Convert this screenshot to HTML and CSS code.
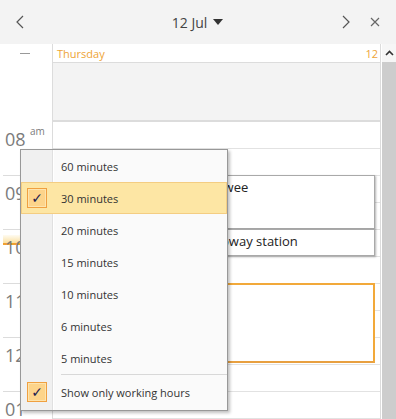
FILE: index.html
```html
<!DOCTYPE html>
<html>
<head>
<meta charset="utf-8">
<link rel="stylesheet" href="styles.css">
</head>
<body>
<div class="app">
  <div class="header">
    <svg class="nav prev" width="12" height="14" viewBox="0 0 12 14"><path d="M8 1 L2 7 L8 13" fill="none" stroke="#555" stroke-width="1.2"/></svg>
    <div class="title">12 Jul <svg class="tri" width="10" height="7" viewBox="0 0 10 7"><path d="M0 0 H10 L5 6 Z" fill="#333"/></svg></div>
    <svg class="nav next" width="12" height="14" viewBox="0 0 12 14"><path d="M3 1 L9 7 L3 13" fill="none" stroke="#555" stroke-width="1.2"/></svg>
    <svg class="close" width="10" height="10" viewBox="0 0 10 10"><path d="M1 1 L9 9 M9 1 L1 9" fill="none" stroke="#666" stroke-width="1.2"/></svg>
  </div>
  <div class="main">
    <div class="gutter">
      <div class="g-head"><span class="dash"></span></div>
      <div class="g-allday"></div>
      <div class="hour"><span class="num">08</span><span class="ampm">am</span></div>
      <div class="hour"><span class="num">09</span></div>
      <div class="hour"><span class="nowline"></span><span class="num">10</span></div>
      <div class="hour"><span class="num">11</span></div>
      <div class="hour"><span class="num">12</span></div>
      <div class="hour"><span class="num">01</span></div>
    </div>
    <div class="day">
      <div class="d-head"><span>Thursday</span><span>12</span></div>
      <div class="d-allday"></div>
      <div class="slots">
        <div class="slot"></div><div class="slot"></div>
        <div class="slot"></div><div class="slot"></div>
        <div class="slot"></div><div class="slot"></div>
        <div class="slot"></div><div class="slot"></div>
        <div class="slot"></div><div class="slot"></div>
        <div class="slot"></div><div class="slot"></div>
        <div class="event ev1">Breakfast meeting with J. Twee</div>
        <div class="event ev2">Meet Anna Jones at the subway station</div>
        <div class="event ev3"></div>
      </div>
    </div>
    <div class="scroll">
      <div class="s-up"><svg width="9" height="6" viewBox="0 0 9 6"><path d="M1 5 L4.5 1.5 L8 5" fill="none" stroke="#333" stroke-width="1.6"/></svg></div>
      <div class="s-track"></div>
    </div>
  </div>

  <div class="menu">
    <div class="item"><span class="icon"></span><span class="label">60 minutes</span></div>
    <div class="item active"><span class="icon"><span class="check">✓</span></span><span class="label">30 minutes</span></div>
    <div class="item"><span class="icon"></span><span class="label">20 minutes</span></div>
    <div class="item"><span class="icon"></span><span class="label">15 minutes</span></div>
    <div class="item"><span class="icon"></span><span class="label">10 minutes</span></div>
    <div class="item"><span class="icon"></span><span class="label">6 minutes</span></div>
    <div class="item"><span class="icon"></span><span class="label">5 minutes</span></div>
    <div class="sep"></div>
    <div class="item last"><span class="icon"><span class="check">✓</span></span><span class="label">Show only working hours</span></div>
  </div>
</div>
</body>
</html>
```

FILE: styles.css
```css
* { box-sizing: border-box; }
html, body { margin: 0; padding: 0; }
body {
  width: 396px;
  height: 419px;
  overflow: hidden;
  background: #fff;
  font-family: "Open Sans", "Noto Sans", sans-serif;
  color: #333;
}
.app { position: relative; width: 396px; height: 419px; overflow: hidden; }

.header {
  height: 44px;
  background: #f3f3f3;
  display: flex;
  align-items: center;
  padding: 0 0 0 15px;
}
.nav { display: block; }
.title {
  flex: 1;
  display: flex;
  align-items: center;
  justify-content: center;
  font-size: 14px;
  color: #444;
  padding-left: 28px;
  gap: 6px;
}
.tri { margin-top: 1px; }
.next { margin-right: 18px; }
.close { margin-right: 16px; }

.main { display: flex; height: 375px; overflow: hidden; }

.gutter { width: 52px; flex: none; }
.g-head { height: 19px; position: relative; }
.dash {
  position: absolute; left: 20px; top: 9px;
  width: 10px; height: 1px; background: #999;
}
.g-allday { height: 59px; }
.hour {
  height: 54px;
  margin-left: 3px;
  border-bottom: 1px solid #dcdcdc;
  position: relative;
  color: #7b7b7b;
}
.num {
  position: absolute; left: 2px; top: 5px;
  font-size: 18px; line-height: 24px;
}
.ampm {
  position: absolute; left: 27px; top: 3px;
  font-size: 10px; line-height: 12px;
}
.nowline {
  position: absolute; left: 0; right: 0; top: 5px;
  height: 10px;
  background: linear-gradient(to bottom, rgba(252,230,170,0.15), #fbe0a0);
  border-bottom: 2px solid #f0a030;
}

.day {
  width: 329px;
  flex: none;
  border-left: 1px solid #dcdcdc;
  border-right: 1px solid #dcdcdc;
}
.d-head {
  height: 19px;
  border-bottom: 1px solid #dcdcdc;
  display: flex;
  justify-content: space-between;
  align-items: center;
  padding: 0 2px 0 4px;
  font-size: 11px;
  color: #eea436;
}
.d-allday {
  height: 59px;
  background: #f3f3f3;
  border-bottom: 2px solid #dcdcdc;
}
.slots { position: relative; }
.slot { height: 27px; border-bottom: 1px solid #e2e2e2; }

.event {
  position: absolute;
  left: 3px;
  right: 5px;
  background: #fff;
  font-size: 13px;
  color: #222;
  padding: 2px 6px;
  white-space: nowrap;
  overflow: hidden;
}
.ev1 { top: 53px; height: 54px; border: 1px solid #a9a9a9; box-shadow: 1px 1px 2px rgba(0,0,0,0.3); }
.ev2 { top: 107px; height: 27px; border: 1px solid #a9a9a9; box-shadow: 1px 1px 2px rgba(0,0,0,0.3); padding-top: 2px; }
.ev3 { top: 161px; height: 80px; border: 2px solid #f2a93a; border-bottom-color: #e8a040; }

.scroll { width: 15px; flex: none; margin-left: 1px; display: flex; flex-direction: column; }
.s-up { height: 18px; background: #f6f6f6; display: flex; align-items: center; justify-content: center; }
.s-track { flex: 1; background: #cdcdcd; }

.menu {
  position: absolute;
  left: 20px; top: 149px;
  width: 208px; height: 262px;
  border: 1px solid #989898;
  box-shadow: 2px 2px 3px rgba(0,0,0,0.25);
  background: linear-gradient(to right, #f0f0f0 0, #f0f0f0 31px, #e0e0e0 31px, #e0e0e0 32px, #fff 32px, #fff 33px, #fafafa 33px);
  display: flex;
  flex-direction: column;
}
.item {
  height: 32px;
  display: flex;
  align-items: center;
  font-size: 11px;
  color: #333;
  border: 1px solid transparent;
}
.item.active {
  background: #fde6a4;
  border-color: #f4cd82;
}
.item.last { height: 34px; }
.icon {
  width: 39px;
  flex: none;
  display: flex;
  align-items: center;
  padding-left: 5px;
}
.check {
  display: flex;
  align-items: center;
  justify-content: center;
  width: 20px; height: 20px;
  border: 1px solid #f0a040;
  background: #fdd48a;
  box-shadow: inset 0 0 0 1px #fde4ae;
  color: #1e2050;
  font-size: 14px;
  font-family: "DejaVu Sans", sans-serif;
}
.sep {
  height: 1px;
  background: #d8d8d8;
  margin-left: 40px;
}
```
